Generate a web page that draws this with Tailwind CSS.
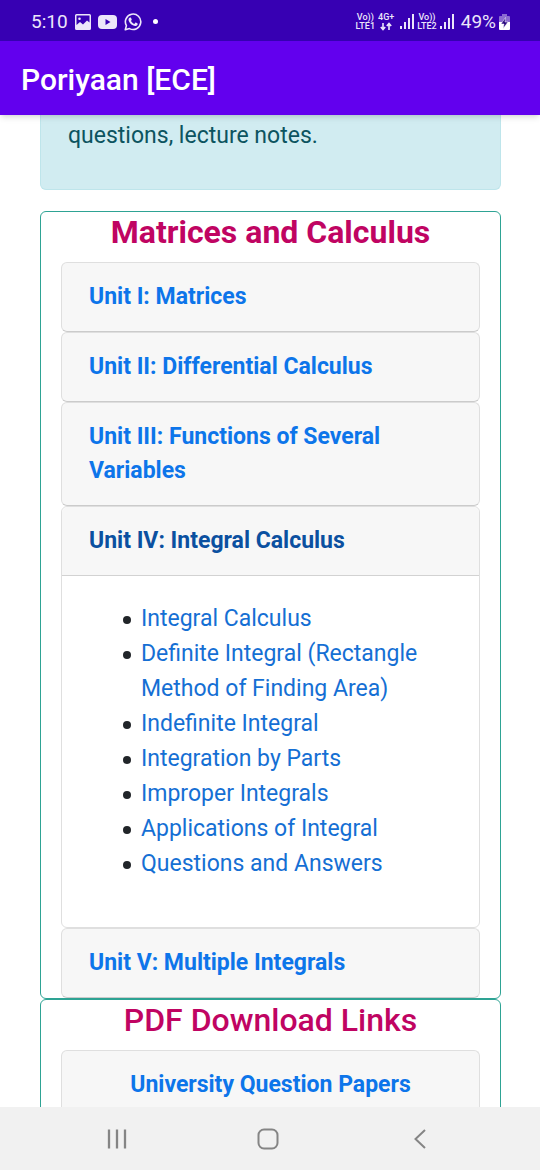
<!DOCTYPE html>
<html lang="en">
<head>
    <meta charset="UTF-8" />
    <meta name="viewport" content="width=device-width, initial-scale=1.0"/>
    <title>Poriyaan [ECE]</title>
    <script src="https://cdn.jsdelivr.net/npm/@tailwindcss/browser@4"></script>
</head>
<body class="flex flex-col h-screen overflow-hidden bg-white font-['Roboto',sans-serif] text-[23px] leading-[34px] text-[#212529]">

    <!-- Status bar -->
    <div class="flex items-center justify-between shrink-0 h-[41px] pl-[31px] pr-[30px] pt-[2px] bg-[#3700b3] text-[#ece6fa]">
        <div class="flex items-center gap-[7px]">
            <span class="text-[19px] leading-6">5:10</span>
            <svg class="w-4 h-4" viewBox="0 0 16 16">
                <path fill="currentColor" fill-rule="evenodd" d="M1.500 0h13A1.500 1.500 0 0 1 16 1.500v13a1.500 1.500 0 0 1-1.500 1.500h-13A1.500 1.500 0 0 1 0 14.500v-13A1.500 1.500 0 0 1 1.500 0zM1.500 1.500v9.500l3.500-3 3 2.500 4-4 2.500 2V1.500zM4.500 3.500a1.300 1.300 0 1 1 0 2.600 1.300 1.300 0 0 1 0-2.600z"/>
            </svg>
            <svg class="w-[19px] h-[14px]" viewBox="0 0 19 14">
                <rect width="19" height="14" rx="4" fill="currentColor"/>
                <path d="M7.500 4v6l5-3z" fill="#3700b3"/>
            </svg>
            <svg class="w-[18px] h-[18px]" viewBox="0 0 18 18">
                <path d="M1.300 16.700l1.100-4.100A7.700 7.700 0 1 1 5.500 15.600z" fill="none" stroke="currentColor" stroke-width="1.600" stroke-linejoin="round"/>
                <path fill="currentColor" d="M6.300 4.600c.4 0 .6.100.8.500l.6 1.500c.1.300 0 .5-.7 1.400.9 1.500 1.900 2.300 3.300 2.900l1-1.200c.2-.2.4-.2.6-.1l1.600.8c.3.200.3.400.2.900-.3 1.100-1.300 1.800-2.400 1.800-3.300-.3-6.300-3.300-6.800-6 0-1.200.6-2.500 1.800-2.500z"/>
            </svg>
            <span class="w-[5px] h-[5px] ml-1 rounded-full bg-white"></span>
        </div>
        <div class="flex items-center gap-[3px] text-center font-medium text-[9px] leading-[9px]">
            <div>Vo))<br>LTE1</div>
            <div class="flex flex-col items-center">
                <span>4G+</span>
                <svg class="w-3 h-[9px]" viewBox="0 0 12 9" fill="none" stroke="currentColor" stroke-width="1.600">
                    <path d="M3 1v6.500M.8 5L3 7.500 5.200 5M9 8V1.500M6.800 4L9 1.500 11.200 4"/>
                </svg>
            </div>
            <svg class="w-[14px] h-[15px] ml-[3px]" viewBox="0 0 14 15" fill="currentColor">
                <path d="M0 12h2v3H0zM4 8h2v7H4zM8 4h2v11H8zM12 0h2v15h-2z"/>
            </svg>
            <div>Vo))<br>LTE2</div>
            <svg class="w-[14px] h-[15px]" viewBox="0 0 14 15" fill="currentColor">
                <path d="M0 12h2v3H0zM4 8h2v7H4zM8 4h2v11H8zM12 0h2v15h-2z"/>
            </svg>
            <span class="ml-1 text-[19px] leading-6 font-normal">49%</span>
            <svg class="w-[11px] h-4" viewBox="0 0 11 16">
                <path d="M3 0h5v2h2a1 1 0 0 1 1 1v6H0V3a1 1 0 0 1 1-1h2z" fill="#8b6ad2"/>
                <path d="M0 8h11v7a1 1 0 0 1-1 1H1a1 1 0 0 1-1-1z" fill="#fff"/>
                <path d="M6.500 3.500L2 10h3L4.200 14.500l4.800-6.500H6z" fill="#2b0a80" stroke="#fff" stroke-width=".5"/>
            </svg>
        </div>
    </div>

    <!-- App bar -->
    <header class="relative z-10 flex items-center shrink-0 h-[74px] px-[21px] pt-1 bg-[#6200ee] shadow-md">
        <h1 class="text-[30px] leading-9 font-medium text-white">Poriyaan [ECE]</h1>
    </header>

    <main class="flex-1 min-h-0 overflow-hidden pl-10 pr-[39px]">
        <div class="mb-[21px] px-[27px] pt-1 pb-9 border border-t-0 border-[#bee5eb] rounded-b-md bg-[#d1ecf1] text-[#0c5460]">
            <p>questions, lecture notes.</p>
        </div>

        <section class="px-5 border border-[#2ea394] rounded-md">
            <h2 class="mb-[10px] text-center text-[32px] leading-10 font-bold text-[#c00462]">Matrices and Calculus</h2>
            <button type="button" class="block w-full px-[27px] py-[17px] border border-[#dfdfdf] border-b-[#cbcbcb] rounded-md bg-[#f7f7f7] text-left font-bold text-[#0d75ea]">Unit I: Matrices</button>
            <button type="button" class="block w-full px-[27px] py-[17px] border border-[#dfdfdf] border-b-[#cbcbcb] rounded-md bg-[#f7f7f7] text-left font-bold text-[#0d75ea]">Unit II: Differential Calculus</button>
            <button type="button" class="block w-full px-[27px] py-[17px] border border-[#dfdfdf] border-b-[#cbcbcb] rounded-md bg-[#f7f7f7] text-left font-bold text-[#0d75ea]">Unit III: Functions of Several Variables</button>
            <div class="border border-[#dfdfdf] rounded-md">
                <button type="button" aria-expanded="true" class="block w-full px-[27px] py-[17px] border-b border-[#d2d2d2] rounded-t-md bg-[#f7f7f7] text-left font-bold text-[#0b50a0]">Unit IV: Integral Calculus</button>
                <ul class="pl-[61px] pr-7 pt-[25px] pb-[46px] leading-[35px]">
                    <li class="flex gap-[10px] before:content-[''] before:shrink-0 before:w-2 before:h-2 before:mt-[15px] before:rounded-full before:bg-[#212529]"><a href="#" class="text-[#156fd4]">Integral Calculus</a></li>
                    <li class="flex gap-[10px] before:content-[''] before:shrink-0 before:w-2 before:h-2 before:mt-[15px] before:rounded-full before:bg-[#212529]"><a href="#" class="text-[#156fd4]">Definite Integral (Rectangle Method of Finding Area)</a></li>
                    <li class="flex gap-[10px] before:content-[''] before:shrink-0 before:w-2 before:h-2 before:mt-[15px] before:rounded-full before:bg-[#212529]"><a href="#" class="text-[#156fd4]">Indefinite Integral</a></li>
                    <li class="flex gap-[10px] before:content-[''] before:shrink-0 before:w-2 before:h-2 before:mt-[15px] before:rounded-full before:bg-[#212529]"><a href="#" class="text-[#156fd4]">Integration by Parts</a></li>
                    <li class="flex gap-[10px] before:content-[''] before:shrink-0 before:w-2 before:h-2 before:mt-[15px] before:rounded-full before:bg-[#212529]"><a href="#" class="text-[#156fd4]">Improper Integrals</a></li>
                    <li class="flex gap-[10px] before:content-[''] before:shrink-0 before:w-2 before:h-2 before:mt-[15px] before:rounded-full before:bg-[#212529]"><a href="#" class="text-[#156fd4]">Applications of Integral</a></li>
                    <li class="flex gap-[10px] before:content-[''] before:shrink-0 before:w-2 before:h-2 before:mt-[15px] before:rounded-full before:bg-[#212529]"><a href="#" class="text-[#156fd4]">Questions and Answers</a></li>
                </ul>
            </div>
            <button type="button" class="block w-full px-[27px] py-[17px] border border-[#dfdfdf] border-b-[#cbcbcb] rounded-md bg-[#f7f7f7] text-left font-bold text-[#0d75ea]">Unit V: Multiple Integrals</button>
        </section>

        <section class="px-5 border border-[#2ea394] rounded-md">
            <h2 class="mb-[10px] text-center text-[32px] leading-10 font-medium text-[#c00462]">PDF Download Links</h2>
            <button type="button" class="block w-full px-[27px] py-[17px] border border-[#dfdfdf] border-b-[#cbcbcb] rounded-md bg-[#f7f7f7] text-center font-bold text-[#0d75ea]">University Question Papers</button>
        </section>
    </main>

    <!-- Navigation bar -->
    <nav class="grid grid-cols-3 shrink-0 h-[63px] pl-[41px] pr-[44px] pt-px bg-[#f1f1f1] text-[#858585]">
        <button type="button" aria-label="Recent apps" class="flex items-center justify-center">
            <svg class="w-5 h-5" viewBox="0 0 20 20" fill="none" stroke="currentColor" stroke-width="2.300">
                <path d="M2 .5v19M10 .5v19M18 .5v19"/>
            </svg>
        </button>
        <button type="button" aria-label="Home" class="flex items-center justify-center">
            <svg class="w-[22px] h-[22px]" viewBox="0 0 22 22" fill="none" stroke="currentColor" stroke-width="2">
                <rect x="1.500" y="1.500" width="19" height="19" rx="5.500"/>
            </svg>
        </button>
        <button type="button" aria-label="Back" class="flex items-center justify-center">
            <svg class="w-3 h-5" viewBox="0 0 12 20" fill="none" stroke="currentColor" stroke-width="2">
                <path d="M11 1L1.500 10l9.500 9"/>
            </svg>
        </button>
    </nav>

</body>
</html>
